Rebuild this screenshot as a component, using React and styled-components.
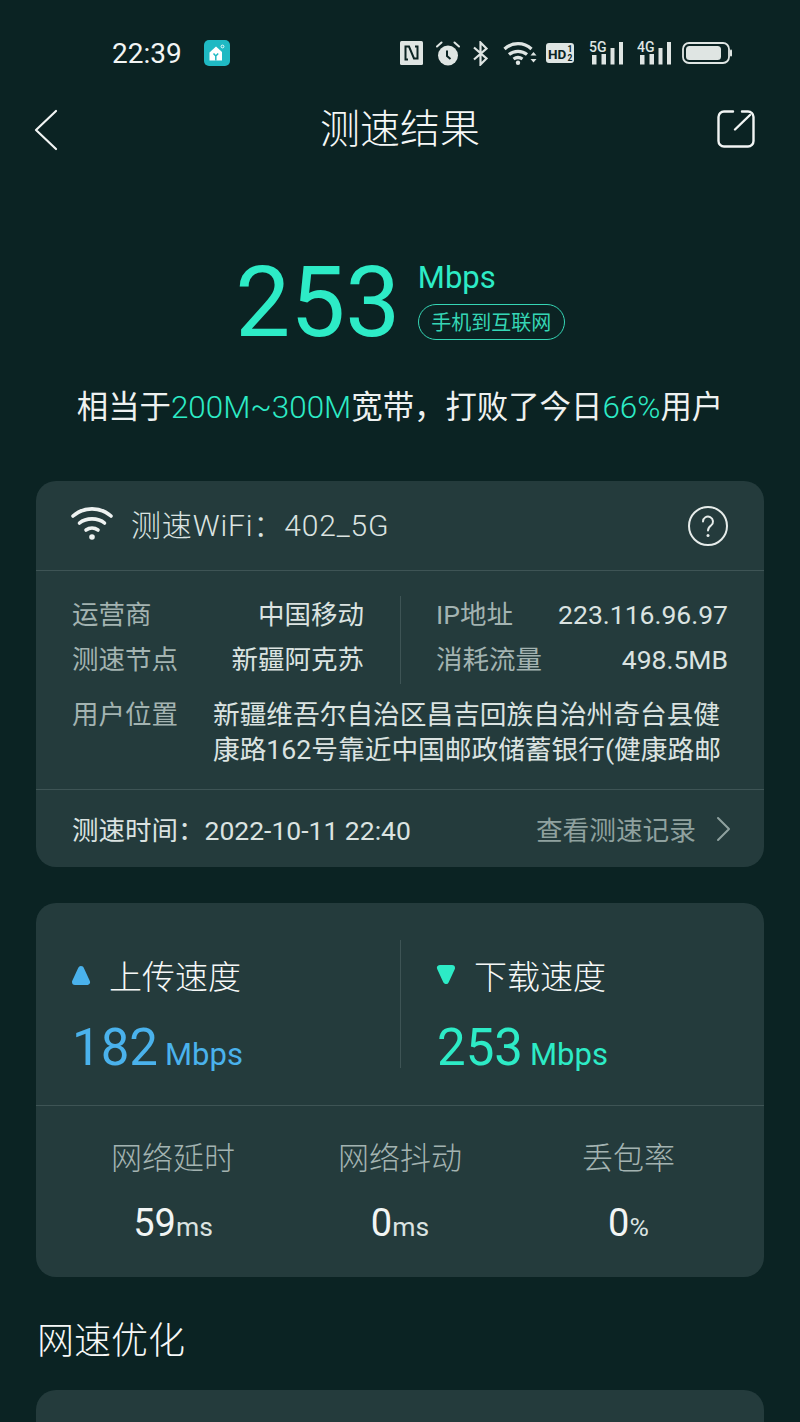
import React from 'react';
import styled, { createGlobalStyle } from 'styled-components';

const GREEN = '#2debc6';
const BLUE = '#4ab2ec';
const MUTED = '#a3b3b1';
const LIGHT = '#dbe3e1';
const LINE = '#3e5455';
const BG = '#0b2323';

const GlobalStyle = createGlobalStyle`
  html, body {
    margin: 0;
    padding: 0;
    background: ${BG};
  }
  body {
    font-family: Roboto, "Noto Sans CJK SC", sans-serif;
    font-weight: 400;
  }
`;

const Page = styled.div`
  width: 800px;
  height: 1422px;
  overflow: hidden;
  background: ${BG};
  color: #fff;
`;

const StatusBar = styled.div`
  display: flex;
  align-items: center;
  justify-content: space-between;
  height: 34px;
  padding: 36px 68px 0 112px;
`;

const StatusLeft = styled.div`
  display: flex;
  align-items: center;
  gap: 22px;
`;

const Clock = styled.span`
  font-size: 28px;
  color: #f2f5f4;
`;

const AppBadge = styled.div`
  display: flex;
  align-items: center;
  justify-content: center;
  width: 26px;
  height: 26px;
  border-radius: 5px;
  background: #1fb9c3;
`;

const StatusIcons = styled.div`
  display: flex;
  align-items: center;
  color: #dfe5e3;
`;

const IconSlot = styled.div`
  display: flex;
  margin-left: ${(p) => p.$gap || 0}px;

  svg { display: block; }
`;

const SignalSlot = styled(IconSlot)`
  margin-top: -5px;
`;

const Header = styled.header`
  display: flex;
  align-items: center;
  justify-content: space-between;
  height: 60px;
  margin-top: 30px;
  padding: 0 44px;
`;

const BackButton = styled.div`
  display: flex;
  width: 38px;
  margin: 0 10px 0 -10px;
`;

const Title = styled.h1`
  margin: 0;
  font-size: 40px;
  font-weight: 300;
  line-height: 60px;
  color: #f6f8f7;
`;

const ShareButton = styled.div`
  display: flex;
  width: 38px;
  margin: 0 1px 3px -1px;
  justify-content: flex-end;
`;

const Hero = styled.section`
  display: flex;
  justify-content: center;
  align-items: center;
  gap: 17.5px;
  margin-top: 91px;
  height: 100px;
`;

const BigSpeed = styled.div`
  font-size: 98px;
  line-height: 100px;
  padding-top: 4px;
  color: ${GREEN};
`;

const HeroSide = styled.div`
  display: flex;
  flex-direction: column;
  align-items: flex-start;
  gap: 8px;
  padding-bottom: 3px;
`;

const HeroUnit = styled.div`
  font-size: 31px;
  line-height: 36px;
  color: ${GREEN};
`;

const Pill = styled.div`
  box-sizing: border-box;
  width: 147px;
  height: 36px;
  display: flex;
  align-items: center;
  justify-content: center;
  font-size: 20px;
  color: #35d6b5;
  border: 1.5px solid #35d6b5;
  border-radius: 18px;
`;

const Summary = styled.p`
  margin: 34px 0 0;
  text-align: center;
  font-size: 31.4px;
  line-height: 46px;
  font-weight: 400;
  color: #eef1f0;
`;

const Accent = styled.span`
  font-weight: 300;
  color: ${GREEN};
`;

const Card = styled.section`
  margin: 0 36px;
  background: #243b3c;
  border-radius: 20px;
`;

const InfoCard = styled(Card)`
  margin-top: 50px;
`;

const WifiRow = styled.div`
  display: flex;
  align-items: center;
  height: 89px;
  padding: 0 36px;
  border-bottom: 1px solid ${LINE};
`;

const WifiGlyph = styled.div`
  display: flex;
  margin: 0 0 6px -1px;
`;

const WifiName = styled.span`
  margin: 0 0 5px 18px;
  flex: 1;
  font-size: 30px;
  font-weight: 300;
  letter-spacing: 0.85px;
  color: ${LIGHT};
`;

const Details = styled.div`
  padding: 25px 36px 21px;
  border-bottom: 1px solid ${LINE};
`;

const DetailGrid = styled.div`
  display: grid;
  grid-template-columns: 1fr 1fr;
`;

const DetailColumn = styled.div`
  padding: ${(p) => (p.$right ? '0 0 5px 35px' : '0 36px 5px 0')};
  border-left: ${(p) => (p.$right ? `1px solid ${LINE}` : 'none')};
  display: flex;
  flex-direction: column;
  gap: 7px;
`;

const DetailRow = styled.div`
  display: flex;
  justify-content: space-between;
  align-items: baseline;
  height: 38px;
`;

const DetailLabel = styled.span`
  font-size: 26.5px;
  line-height: 38px;
  color: ${MUTED};
`;

const DetailValue = styled.span`
  font-size: 26.5px;
  line-height: 38px;
  color: ${LIGHT};
`;

const LocationRow = styled.div`
  display: flex;
  justify-content: space-between;
  align-items: baseline;
  margin-top: 12px;
`;

const LocationText = styled.div`
  width: 515px;
  font-size: 26.7px;
  line-height: 35px;
  color: ${LIGHT};
  height: 70px;
  overflow: hidden;
`;

const TimeRow = styled.div`
  box-sizing: border-box;
  display: flex;
  align-items: center;
  justify-content: space-between;
  height: 77px;
  padding: 0 33px 0 36px;
`;

const TimeText = styled.span`
  font-size: 26.5px;
  color: ${LIGHT};
`;

const HistoryLink = styled.span`
  display: flex;
  align-items: center;
  gap: 20px;
  font-size: 26.7px;
  color: #8fa19f;
`;

const SpeedCard = styled(Card)`
  margin-top: 36px;
`;

const SpeedTop = styled.div`
  display: grid;
  grid-template-columns: 1fr 1fr;
  padding: 37px 0;
  border-bottom: 1px solid ${LINE};
`;

const SpeedColumn = styled.div`
  height: 128px;
  padding-left: 36px;
  border-left: ${(p) => (p.$right ? `1px solid ${LINE}` : 'none')};
`;

const SpeedHeading = styled.div`
  display: flex;
  align-items: center;
  gap: 18px;
  height: 50px;
  padding-top: 10px;
  margin-left: -1px;
  font-size: 33px;
  font-weight: 300;
  color: #f6f8f7;
`;

const SpeedValue = styled.div`
  display: flex;
  align-items: baseline;
  gap: 7px;
  margin-top: 18px;
  color: ${(p) => p.$color};
  font-size: 51px;
  line-height: 60px;
`;

const SpeedUnit = styled.span`
  font-size: 31px;
`;

const Metrics = styled.div`
  display: grid;
  grid-template-columns: 274px 180px 274px;
  padding: 30px 0 29px;
`;

const Metric = styled.div`
  display: flex;
  flex-direction: column;
  align-items: center;
  gap: 20px;

  &:last-child { padding-left: 3px; }
`;

const MetricLabel = styled.span`
  font-size: 31px;
  line-height: 46px;
  font-weight: 300;
  color: ${MUTED};
`;

const MetricValue = styled.span`
  font-size: 38px;
  line-height: 42px;
  color: #f2f5f4;
`;

const MetricUnit = styled.span`
  font-size: 26.5px;
  color: ${LIGHT};
`;

const SectionTitle = styled.h2`
  margin: 39px 0 0 37px;
  font-size: 37px;
  line-height: 52px;
  font-weight: 300;
  color: #f6f8f7;
`;

const ClippedCard = styled(Card)`
  margin-top: 22px;
  height: 120px;
`;

const Wifi = () => (
  <svg width="42" height="36" viewBox="0 0 42 36" fill="none" stroke="#eef2f1" strokeWidth="3.6" strokeLinecap="round">
    <path d="M2 11C12.500 1.500 29.500 1.500 40 11" />
    <path d="M8.500 18C15 12.500 27 12.500 33.500 18" />
    <path d="M15 25C18.500 22.500 23.500 22.500 27 25" />
    <circle cx="21" cy="32" r="2.800" fill="#eef2f1" stroke="none" />
  </svg>
);

const Nfc = () => (
  <svg width="23" height="24" viewBox="0 0 23 24">
    <rect width="23" height="24" rx="1.500" fill="currentColor" />
    <path d="M8 18.500H5.500V5.500H9L14 17.500H17.500V5.500H15" fill="none" stroke={BG} strokeWidth="2" />
  </svg>
);

const Alarm = () => (
  <svg width="24" height="25" viewBox="0 0 24 25">
    <circle cx="12" cy="14.500" r="10" fill="currentColor" />
    <path d="M1 5.500 5.500 1.500M23 5.500 18.500 1.500" stroke="currentColor" strokeWidth="2" strokeLinecap="round" />
    <path d="M11 9.500V15l3.500 3" fill="none" stroke={BG} strokeWidth="2" />
  </svg>
);

const Bluetooth = () => (
  <svg width="15" height="25" viewBox="0 0 15 25" fill="none" stroke="currentColor" strokeWidth="2.200">
    <path d="M1 6.500 13.500 17.500 7.500 23.500V1.500L13.500 7.500 1 18.500" />
  </svg>
);

const WifiSmall = () => (
  <svg width="34" height="24" viewBox="0 0 34 24" fill="none" stroke="currentColor" strokeWidth="3.200">
    <path d="M1.500 8C9 .8 21 .8 28.500 8" />
    <path d="M6 13.500C11 9.300 19 9.300 24 13.500" />
    <path d="M10.500 18C13.500 16 16.500 16 19.500 18" />
    <circle cx="15" cy="21.800" r="2.200" fill="currentColor" stroke="none" />
    <path d="M27.500 14.500 30.500 11 33.500 14.500zM27.500 18 30.500 21.500 33.500 18z" fill="currentColor" stroke="none" />
  </svg>
);

const HdBadge = () => (
  <svg width="28" height="20" viewBox="0 0 28 20">
    <rect width="28" height="20" rx="3" fill="currentColor" />
    <text x="2" y="15.500" fontFamily="Roboto, sans-serif" fontSize="13.500" fontWeight="700" fill={BG}>HD</text>
    <text x="21.500" y="9" fontFamily="Roboto, sans-serif" fontSize="8.500" fontWeight="700" fill={BG}>1</text>
    <text x="21.500" y="18" fontFamily="Roboto, sans-serif" fontSize="8.500" fontWeight="700" fill={BG}>2</text>
  </svg>
);

const Signal = ({ label }) => (
  <svg width="34" height="29" viewBox="0 -5 34 29">
    <text x="0" y="11" fontFamily="Roboto, sans-serif" fontSize="14" fontWeight="500" fill="currentColor">{label}</text>
    <rect x="3" y="14" width="4.500" height="9.500" fill="currentColor" />
    <rect x="12.500" y="13" width="4.500" height="10.500" fill="currentColor" />
    <rect x="21.500" y="7" width="4" height="16.500" fill="currentColor" />
    <rect x="30" y="1" width="4" height="22.500" fill="currentColor" />
  </svg>
);

const Battery = () => (
  <svg width="50" height="22" viewBox="0 0 50 22">
    <rect x="1" y="1" width="46" height="20" rx="6" fill="none" stroke="currentColor" strokeWidth="1.800" />
    <rect x="4" y="4" width="35" height="14" rx="3.500" fill="currentColor" />
    <rect x="48" y="7.500" width="2" height="7" rx="1" fill="currentColor" />
  </svg>
);

const HomeMark = () => (
  <svg width="20" height="20" viewBox="0 0 20 20">
    <path d="M2.500 17.500V9.500L9 3.500l6 5.500v8.500z" fill="#fff" />
    <path d="M8.800 17.500v-4.500M8.800 13 6.500 10.500M8.800 13l2.400-2.500" fill="none" stroke="#1fb9c3" strokeWidth="1.500" />
    <circle cx="15.500" cy="3.500" r="1.400" fill="none" stroke="#fff" strokeWidth="0.900" />
  </svg>
);

const BackIcon = () => (
  <svg width="24" height="42" viewBox="0 0 24 42" fill="none" stroke="#f2f5f4" strokeWidth="2.200" strokeLinecap="round" strokeLinejoin="round">
    <path d="M22 2 2 21 22 40" />
  </svg>
);

const ShareIcon = () => (
  <svg width="38" height="38" viewBox="0 0 38 38" fill="none" stroke="#f2f5f4" strokeWidth="2.400" strokeLinecap="round" strokeLinejoin="round">
    <path d="M16 1.500H7A5.500 5.500 0 0 0 1.500 7v24A5.500 5.500 0 0 0 7 36.500h24a5.500 5.500 0 0 0 5.500-5.500V7A5.500 5.500 0 0 0 31 1.500h-6" />
    <path d="M18 19.500 33 5" />
  </svg>
);

const HelpIcon = () => (
  <svg width="40" height="40" viewBox="0 0 40 40" fill="none" stroke="#e6ecea" strokeWidth="2">
    <circle cx="20" cy="20" r="19" />
    <path d="M15 15.500a5 5 0 1 1 8 4c-2 1.500-3 2.500-3 5" strokeLinecap="round" />
    <circle cx="20" cy="29.500" r="1.500" fill="#e6ecea" stroke="none" />
  </svg>
);

const NextIcon = () => (
  <svg width="15" height="26" viewBox="0 0 15 26" fill="none" stroke="#8fa19f" strokeWidth="2" strokeLinecap="round" strokeLinejoin="round">
    <path d="M2 2 13 13 2 24" />
  </svg>
);

const Triangle = ({ color, down }) => (
  <svg width="20" height="22" viewBox="0 0 20 22" style={down ? { transform: 'rotate(180deg)' } : undefined}>
    <path d="M10 5 16 18H4Z" fill={color} stroke={color} strokeWidth="6" strokeLinejoin="round" />
  </svg>
);

const metrics = [
  { label: '网络延时', value: '59', unit: 'ms' },
  { label: '网络抖动', value: '0', unit: 'ms' },
  { label: '丢包率', value: '0', unit: '%' },
];

export default function App() {
  return (
    <Page>
      <GlobalStyle />
      <StatusBar>
        <StatusLeft>
          <Clock>22:39</Clock>
          <AppBadge><HomeMark /></AppBadge>
        </StatusLeft>
        <StatusIcons>
          <IconSlot><Nfc /></IconSlot>
          <IconSlot $gap={13}><Alarm /></IconSlot>
          <IconSlot $gap={13}><Bluetooth /></IconSlot>
          <IconSlot $gap={15}><WifiSmall /></IconSlot>
          <IconSlot $gap={9}><HdBadge /></IconSlot>
          <SignalSlot $gap={15}><Signal label="5G" /></SignalSlot>
          <SignalSlot $gap={14}><Signal label="4G" /></SignalSlot>
          <IconSlot $gap={11}><Battery /></IconSlot>
        </StatusIcons>
      </StatusBar>

      <Header>
        <BackButton><BackIcon /></BackButton>
        <Title>测速结果</Title>
        <ShareButton><ShareIcon /></ShareButton>
      </Header>

      <Hero>
        <BigSpeed>253</BigSpeed>
        <HeroSide>
          <HeroUnit>Mbps</HeroUnit>
          <Pill>手机到互联网</Pill>
        </HeroSide>
      </Hero>

      <Summary>
        相当于<Accent>200M~300M</Accent>宽带，打败了今日<Accent>66%</Accent>用户
      </Summary>

      <InfoCard>
        <WifiRow>
          <WifiGlyph><Wifi /></WifiGlyph>
          <WifiName>测速WiFi：402_5G</WifiName>
          <HelpIcon />
        </WifiRow>
        <Details>
          <DetailGrid>
            <DetailColumn>
              <DetailRow>
                <DetailLabel>运营商</DetailLabel>
                <DetailValue>中国移动</DetailValue>
              </DetailRow>
              <DetailRow>
                <DetailLabel>测速节点</DetailLabel>
                <DetailValue>新疆阿克苏</DetailValue>
              </DetailRow>
            </DetailColumn>
            <DetailColumn $right>
              <DetailRow>
                <DetailLabel>IP地址</DetailLabel>
                <DetailValue>223.116.96.97</DetailValue>
              </DetailRow>
              <DetailRow>
                <DetailLabel>消耗流量</DetailLabel>
                <DetailValue>498.5MB</DetailValue>
              </DetailRow>
            </DetailColumn>
          </DetailGrid>
          <LocationRow>
            <DetailLabel>用户位置</DetailLabel>
            <LocationText>新疆维吾尔自治区昌吉回族自治州奇台县健康路162号靠近中国邮政储蓄银行(健康路邮</LocationText>
          </LocationRow>
        </Details>
        <TimeRow>
          <TimeText>测速时间：2022-10-11 22:40</TimeText>
          <HistoryLink>
            查看测速记录
            <NextIcon />
          </HistoryLink>
        </TimeRow>
      </InfoCard>

      <SpeedCard>
        <SpeedTop>
          <SpeedColumn>
            <SpeedHeading>
              <Triangle color={BLUE} />
              上传速度
            </SpeedHeading>
            <SpeedValue $color={BLUE}>182<SpeedUnit>Mbps</SpeedUnit></SpeedValue>
          </SpeedColumn>
          <SpeedColumn $right>
            <SpeedHeading>
              <Triangle color={GREEN} down />
              下载速度
            </SpeedHeading>
            <SpeedValue $color={GREEN}>253<SpeedUnit>Mbps</SpeedUnit></SpeedValue>
          </SpeedColumn>
        </SpeedTop>
        <Metrics>
          {metrics.map((m) => (
            <Metric key={m.label}>
              <MetricLabel>{m.label}</MetricLabel>
              <MetricValue>{m.value}<MetricUnit>{m.unit}</MetricUnit></MetricValue>
            </Metric>
          ))}
        </Metrics>
      </SpeedCard>

      <SectionTitle>网速优化</SectionTitle>
      <ClippedCard />
    </Page>
  );
}
